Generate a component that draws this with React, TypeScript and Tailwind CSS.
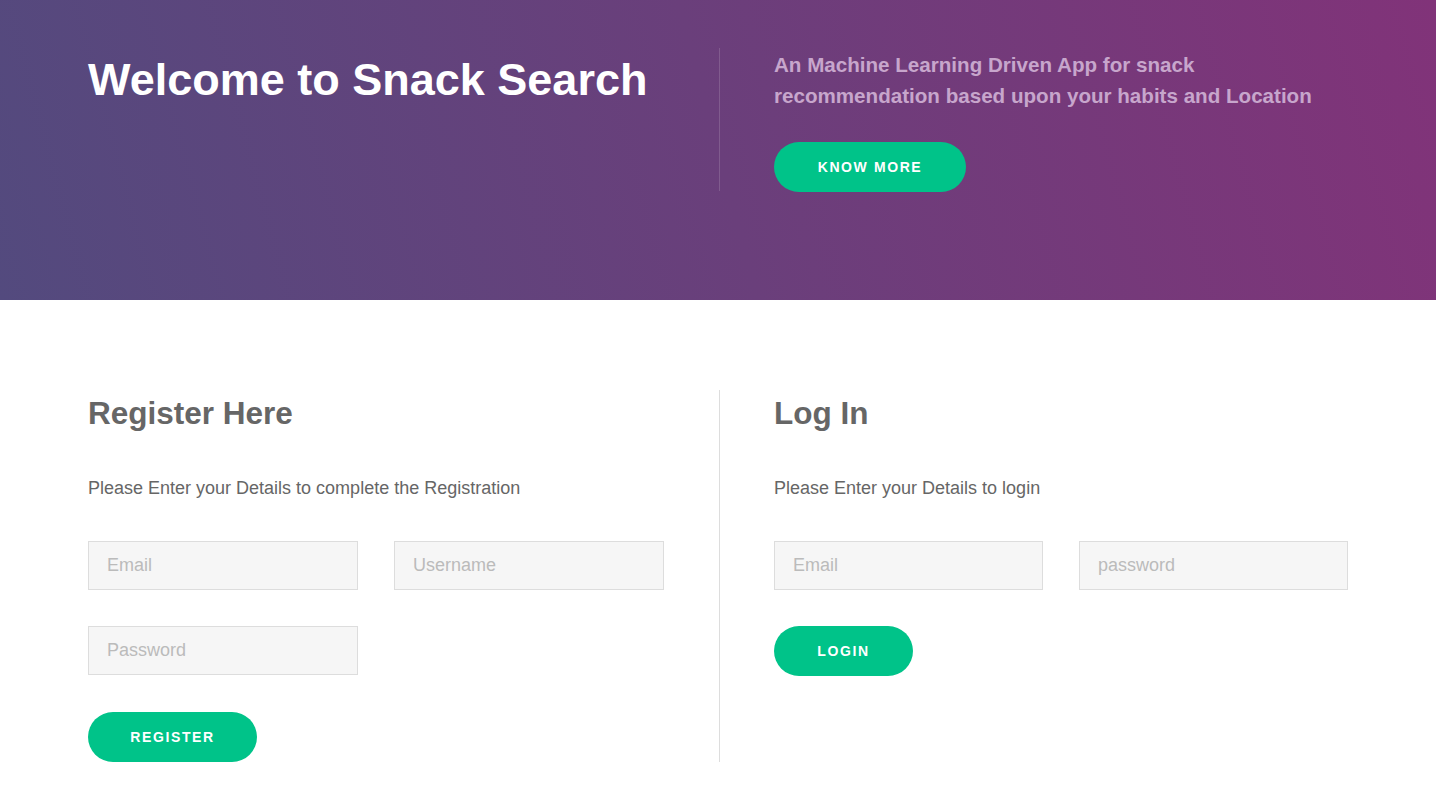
import { useState } from "react";

const inputCls =
  "shrink-0 h-[49px] bg-[#f6f6f6] border border-[#dddddd] px-[18px] text-[18px] text-[#555] placeholder:text-[#bbbbbb] outline-none";

const btnCls =
  "h-[50px] rounded-full bg-[#00c389] text-white text-[14px] font-extrabold tracking-[1.6px] uppercase";

export default function App() {
  const [reg, setReg] = useState({ email: "", username: "", password: "" });
  const [login, setLogin] = useState({ email: "", password: "" });

  return (
    <div className="min-h-screen bg-white font-['Liberation_Sans',Arial,sans-serif]">
      {/* banner */}
      <div className="h-[300px] bg-[linear-gradient(75deg,#534a7e_0%,#6a3f7b_50%,#813379_100%)]">
        <div className="mx-[88px] flex pt-[48px]">
          <div className="w-[632px] shrink-0 border-r border-white/15 h-[143px]">
            <h1 className="text-[45px] font-bold text-white leading-[64px]">
              Welcome to Snack Search
            </h1>
          </div>
          <div className="pl-[54px]">
            <p className="text-[20.6px] font-bold text-[#c7a6cc] leading-[31px] mt-[1px]">
              An Machine Learning Driven App for snack
              <br />
              recommendation based upon your habits and Location
            </p>
            <button className={btnCls + " w-[192px] mt-[31px]"}>Know More</button>
          </div>
        </div>
      </div>

      {/* forms */}
      <div className="mx-[88px] flex pt-[90px]">
        <div className="w-[632px] shrink-0 border-r border-[#dddddd] h-[372px]">
          <h2 className="text-[31.5px] font-bold text-[#666666] leading-[46px]">Register Here</h2>
          <p className="text-[18px] text-[#666666] mt-[40px] leading-[24px]">
            Please Enter your Details to complete the Registration
          </p>
          <div className="flex gap-[36px] mt-[41px]">
            <input
              className={inputCls + " w-[270px]"}
              placeholder="Email"
              value={reg.email}
              onChange={(e) => setReg({ ...reg, email: e.target.value })}
            />
            <input
              className={inputCls + " w-[270px]"}
              placeholder="Username"
              value={reg.username}
              onChange={(e) => setReg({ ...reg, username: e.target.value })}
            />
          </div>
          <input
            type="password"
            className={inputCls + " w-[270px] mt-[36px] block"}
            placeholder="Password"
            value={reg.password}
            onChange={(e) => setReg({ ...reg, password: e.target.value })}
          />
          <button className={btnCls + " w-[169px] mt-[37px]"}>Register</button>
        </div>
        <div className="pl-[54px]">
          <h2 className="text-[31.5px] font-bold text-[#666666] leading-[46px]">Log In</h2>
          <p className="text-[18px] text-[#666666] mt-[40px] leading-[24px]">
            Please Enter your Details to login
          </p>
          <div className="flex gap-[36px] mt-[41px]">
            <input
              className={inputCls + " w-[269px]"}
              placeholder="Email"
              value={login.email}
              onChange={(e) => setLogin({ ...login, email: e.target.value })}
            />
            <input
              type="password"
              className={inputCls + " w-[269px]"}
              placeholder="password"
              value={login.password}
              onChange={(e) => setLogin({ ...login, password: e.target.value })}
            />
          </div>
          <button className={btnCls + " w-[139px] mt-[36px] block"}>Login</button>
        </div>
      </div>
    </div>
  );
}
